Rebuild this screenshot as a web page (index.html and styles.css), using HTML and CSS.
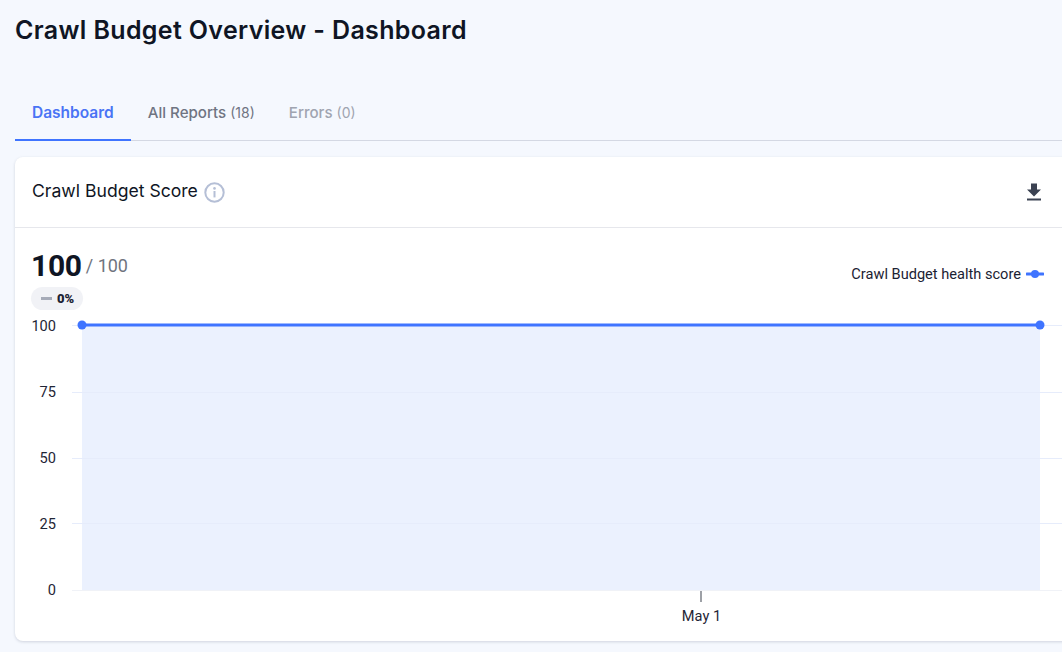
FILE: index.html
```html
<!DOCTYPE html>
<html lang="en">
<head>
<meta charset="utf-8">
<title>Crawl Budget Overview - Dashboard</title>
<link rel="stylesheet" href="styles.css">
</head>
<body>
<main class="page">
  <h1 class="title">Crawl Budget Overview - Dashboard</h1>
  <nav class="tabs">
    <a class="tab tab-active">Dashboard</a>
    <a class="tab">All Reports <span class="count">(18)</span></a>
    <a class="tab tab-muted">Errors <span class="count">(0)</span></a>
  </nav>
  <section class="card">
    <header class="card-head">
      <div class="card-title">
        <h2>Crawl Budget Score</h2>
        <svg class="info" width="21" height="21" viewBox="0 0 21 21" aria-hidden="true">
          <circle cx="10.5" cy="10.5" r="9.2" fill="none" stroke="#b5bfd6" stroke-width="2"/>
          <rect x="9.5" y="9" width="2" height="6.4" fill="#b5bfd6"/>
          <circle cx="10.5" cy="6.4" r="1.3" fill="#b5bfd6"/>
        </svg>
      </div>
      <svg class="download" width="24" height="24" viewBox="0 0 24 24" aria-hidden="true">
        <path d="M19 9.500h-4V3.500H9v6H5l7 7 7-7zM5 18.500v2h14v-2H5z" fill="#3b4252"/>
      </svg>
    </header>
    <div class="card-body">
      <div class="score-row">
        <div class="score"><strong>100</strong><span class="score-max">/ 100</span></div>
        <div class="legend">
          <span>Crawl Budget health score</span>
          <svg width="18" height="10" viewBox="0 0 18 10" aria-hidden="true">
            <path d="M1 5h16" stroke="#3f74ff" stroke-width="3" stroke-linecap="round"/>
            <circle cx="9" cy="5" r="4" fill="#3f74ff"/>
          </svg>
        </div>
      </div>
      <div class="delta"><i class="delta-dash"></i><b>0%</b></div>
      <svg class="chart" width="1047" height="322" viewBox="0 0 1047 322" role="img" aria-label="Crawl Budget health score chart">
        <rect x="67" y="5" width="958" height="265" fill="#ebf1fe"/>
        <g stroke="#e6ecfb" stroke-width="1">
          <path d="M57 5.500H1047"/>
          <path d="M57 72.500H1047"/>
          <path d="M57 138.500H1047"/>
          <path d="M57 203.500H1047"/>
        </g>
        <path d="M57 270.500H1047" stroke="#f0f2f7" stroke-width="1"/>
        <path d="M67 5H1025" stroke="#3f74ff" stroke-width="3"/>
        <circle cx="67" cy="5" r="4.500" fill="#3f74ff"/>
        <circle cx="1025" cy="5" r="4.500" fill="#3f74ff"/>
        <g class="axis-y" text-anchor="end">
          <text x="41" y="11">100</text>
          <text x="41" y="77">75</text>
          <text x="41" y="143">50</text>
          <text x="41" y="209">25</text>
          <text x="41" y="275">0</text>
        </g>
        <path d="M686 271V282" stroke="#7d8089" stroke-width="1.500"/>
        <text class="axis-x" x="686.500" y="301" text-anchor="middle">May 1</text>
      </svg>
    </div>
  </section>
</main>
</body>
</html>
```
FILE: styles.css
```css
* { box-sizing: border-box; }
html, body { margin: 0; height: 100%; }
body {
  background: #f5f8fe;
  color: #0f1524;
  font-family: "Inter", "Liberation Sans", sans-serif;
  overflow: hidden;
}
.page { padding: 14px 0 0 15px; width: 1062px; }
.title {
  margin: 0;
  font-size: 25px;
  line-height: 33px;
  font-weight: 600;
  letter-spacing: .35px;
}
.tabs {
  display: flex;
  margin-top: 37px;
  height: 57px;
  border-bottom: 1px solid #d4d8e3;
  font-size: 15.100px;
  font-weight: 500;
}
.tab {
  display: block;
  padding: 19px 17px 0;
  color: #6f7482;
}
.tab-active {
  color: #4a74f5;
  font-size: 15.500px;
  font-weight: 600;
  border-bottom: 2px solid #3f74ff;
  margin-bottom: -1px;
}
.tab-muted { color: #a0a4b0; }
.count { font-size: 14px; font-weight: 400; }
.card {
  margin-top: 16px;
  width: 1062px;
  height: 484px;
  background: #fff;
  border-radius: 8px;
  box-shadow: 0 1px 3px rgba(40, 50, 80, .18);
}
.card-head {
  display: flex;
  align-items: center;
  justify-content: space-between;
  height: 71px;
  padding: 0 31px 0 17px;
  border-bottom: 1px solid #e6e7ec;
}
.card-title { display: flex; align-items: center; gap: 6px; }
.card-title h2 { margin: 0 0 2px; font-size: 17.600px; line-height: 24px; font-weight: 400; }
.info, .download { display: block; }
.card-body { padding-top: 20px; }
.score-row {
  display: flex;
  justify-content: space-between;
  align-items: flex-start;
  padding-left: 16px;
  width: 1047px;
}
.score { display: flex; align-items: center; gap: 4px; font-family: "Roboto", sans-serif; }
.score strong { font-size: 30px; line-height: 36px; font-weight: 700; letter-spacing: -.3px; }
.score-max { font-size: 18px; line-height: 36px; align-self: flex-start; color: #70747e; }
.legend {
  display: flex;
  align-items: center;
  gap: 5px;
  margin: 16px 18px 0 0;
  font: 14.600px/20px "Roboto", sans-serif;
  color: #1b2233;
}
.delta {
  display: flex;
  align-items: center;
  gap: 5px;
  width: 52px;
  height: 23px;
  margin: 3px 0 0 16px;
  padding-left: 10px;
  border-radius: 12px;
  background: #f1f2f6;
  font: 700 13px/23px "Roboto", sans-serif;
  color: #1b2233;
}
.delta-dash { width: 11px; height: 3px; background: #a6abb8; }
.chart { display: block; margin-top: 10px; overflow: visible; }
.axis-y text, .axis-x {
  font: 14.600px "Roboto", sans-serif;
  fill: #1f2636;
}
```
